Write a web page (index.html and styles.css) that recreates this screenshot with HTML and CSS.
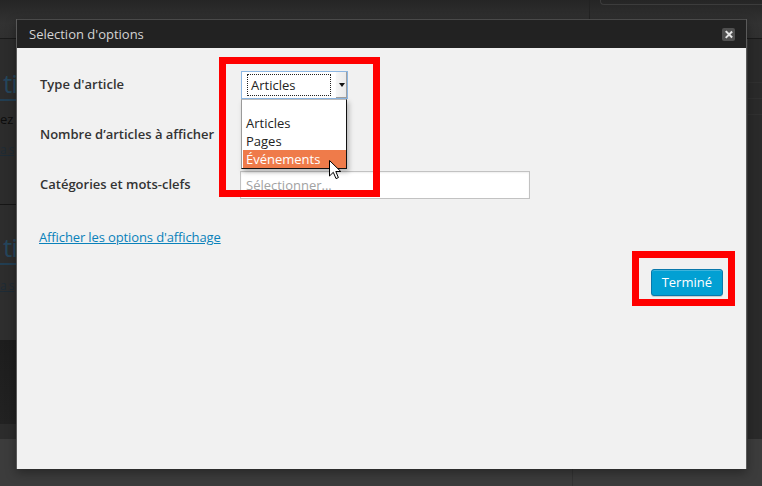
FILE: index.html
```html
<!DOCTYPE html>
<html lang="fr">
<head>
<meta charset="utf-8">
<title>Selection d'options</title>
<link rel="stylesheet" href="styles.css">
</head>
<body>
<div class="page">
  <header class="wp-top">
    <div class="top-line"></div>
    <div class="top-box"></div>
  </header>
  <main class="wp-main">
    <section class="wp-col">
      <article class="post post-first">
        <h2 class="post-title">ti</h2>
        <p class="post-excerpt">ez</p>
        <a class="post-link">a s</a>
      </article>
      <article class="post post-second">
        <h2 class="post-title">ti</h2>
        <a class="post-link">a s</a>
      </article>
      <div class="band-dark"></div>
      <div class="band-light"></div>
    </section>
    <div class="wp-center"></div>
    <aside class="wp-side">
      <div class="side-row"></div>
      <div class="side-row"></div>
      <div class="side-row"></div>
    </aside>
  </main>
  <footer class="wp-foot"><div class="foot-line"></div></footer>
</div>

<div class="modal">
  <div class="modal-head">
    <span class="modal-title">Selection d'options</span>
    <span class="modal-close"></span>
  </div>
  <div class="modal-body">
    <div class="form-grid">
      <label class="form-label">Type d'article</label>
      <div class="fake-select">
        <span class="select-value">Articles</span>
        <span class="select-arrow"></span>
      </div>
      <label class="form-label">Nombre d’articles à afficher</label>
      <div class="hidden-field"></div>
      <label class="form-label">Catégories et mots-clefs</label>
      <div class="fake-input">Sélectionner...</div>
    </div>
    <a class="display-link">Afficher les options d'affichage</a>
    <div class="actions">
      <button class="btn-primary">Terminé</button>
    </div>
  </div>
</div>

<ul class="dropdown">
  <li class="opt opt-blank"></li>
  <li class="opt">Articles</li>
  <li class="opt">Pages</li>
  <li class="opt opt-active">Événements</li>
</ul>

<svg class="cursor" width="13" height="20" viewBox="0 0 13 20">
  <path d="M0.5 0.5 L0.5 16 L4.3 12.3 L7 18.6 L9.4 17.6 L6.8 11.5 L11.8 11.5 Z" fill="#fff" stroke="#000" stroke-width="1" stroke-linejoin="miter"/>
</svg>

<div class="annot annot-select"></div>
<div class="annot annot-button"></div>
</body>
</html>
```

FILE: styles.css
```css
* { box-sizing: border-box; }

html, body {
  margin: 0;
  padding: 0;
}

body {
  width: 762px;
  height: 486px;
  overflow: hidden;
  position: relative;
  background: #3d3d3d;
  font-family: "Open Sans", "DejaVu Sans", sans-serif;
}

/* ---------- dimmed backdrop ---------- */
.page {
  height: 486px;
  display: flex;
  flex-direction: column;
}

.wp-top {
  height: 39px;
  display: flex;
  padding-left: 589px;
  background: linear-gradient(#252525, #323232 60%, #303030);
  border-bottom: 1px solid #1a1a1a;
}

.top-line {
  width: 11px;
  height: 22px;
  border-left: 1px solid #232323;
}

.top-box {
  flex: 1;
  height: 5px;
  border-left: 1px solid #3c3c3c;
  border-bottom: 1px solid #3c3c3c;
  border-bottom-left-radius: 4px;
}

.wp-main {
  height: 400px;
  display: flex;
  background: #2c2c2c;
}

.wp-col {
  width: 16px;
  flex: none;
  display: flex;
  flex-direction: column;
}

.wp-center {
  flex: 1;
  background: #2c2c2c;
}

.post {
  white-space: nowrap;
}

.post-first {
  height: 166px;
  padding-top: 28px;
  border-bottom: 1px solid #161616;
}

.post-second {
  height: 95px;
  padding-top: 26px;
  background: #2d2d2d;
}

.post-title {
  margin: 0;
  padding-left: 3px;
  font-size: 26px;
  font-weight: 400;
  line-height: 32px;
  letter-spacing: -1px;
  color: #25465d;
  border-bottom: 2px solid #223e52;
}

.post-excerpt {
  margin: 9px 0 0 0;
  font-size: 13px;
  line-height: 18px;
  color: #0d0d0d;
}

.post-link {
  display: block;
  margin: 13px 0 0 0;
  font-size: 12px;
  line-height: 18px;
  letter-spacing: -0.5px;
  color: #1e2b35;
  text-decoration: underline;
}

.post-second .post-link {
  margin-top: 12px;
}

.band-dark {
  height: 40px;
  background: #2e2e2e;
}

.band-light {
  height: 84px;
  background: linear-gradient(#1d1d1d, #222);
}

.wp-side {
  width: 15px;
  border-left: 1px solid #3a3a3a;
  background: #2a2a2a;
  padding-top: 28px;
}

.side-row {
  height: 16px;
  border-bottom: 1px solid #303030;
}

.wp-foot {
  flex: 1;
  background: #3c3c3c;
  padding-left: 572px;
}

.foot-line {
  height: 100%;
  border-left: 1px solid #333;
}

/* ---------- modal ---------- */
.modal {
  position: absolute;
  left: 16px;
  top: 19px;
  width: 731px;
  height: 450px;
  display: flex;
  flex-direction: column;
  border-left: 1px solid #5a5a5a;
  border-right: 1px solid #5a5a5a;
  box-shadow: 0 4px 10px rgba(0, 0, 0, 0.35);
}

.modal-head {
  height: 29px;
  flex: none;
  display: flex;
  align-items: center;
  justify-content: space-between;
  padding: 0 11px 0 12px;
  background: #222;
  border-top: 1px solid #4a4a4a;
}

.modal-title {
  font-size: 13px;
  color: #d4d4d4;
  line-height: 18px;
}

.modal-close {
  width: 13px;
  height: 13px;
  border-radius: 2px;
  background: #505050;
  position: relative;
  margin-top: 1px;
}

.modal-close::before,
.modal-close::after {
  content: "";
  position: absolute;
  left: 6px;
  top: 2px;
  width: 1.5px;
  height: 9px;
  background: #e6e6e6;
  transform: rotate(45deg);
}

.modal-close::after {
  transform: rotate(-45deg);
}

.modal-body {
  flex: 1;
  background: #f1f1f1;
  padding: 23px 23px 0 23px;
  display: flex;
  flex-direction: column;
}

.form-grid {
  display: grid;
  grid-template-columns: 200px 1fr;
  grid-auto-rows: 28px;
  row-gap: 22px;
  align-items: center;
}

.form-label {
  font-size: 13px;
  font-weight: 600;
  color: #333;
  line-height: 18px;
  padding-bottom: 3px;
}

.fake-select {
  width: 107px;
  height: 28px;
  margin-left: 1px;
  display: flex;
  align-items: stretch;
  background: #fff;
  border: 1px solid #8cb6e2;
}

.select-value {
  width: 82px;
  margin: 3px 0 3px 6px;
  outline: 1px dotted #222;
  font-size: 13px;
  line-height: 20px;
  color: #222;
  padding-left: 3px;
}

.select-arrow {
  margin-left: auto;
  width: 12px;
  background: linear-gradient(90deg, #f6f6f6, #e9e9e9);
  border-left: 1px solid #fdfdfd;
  box-shadow: inset -1px -1px 0 #a0a0a0;
  position: relative;
}

.select-arrow::after {
  content: "";
  position: absolute;
  left: 3px;
  top: 11px;
  border-left: 3px solid transparent;
  border-right: 3px solid transparent;
  border-top: 4px solid #111;
}

.hidden-field {
  height: 28px;
}

.fake-input {
  width: 290px;
  height: 28px;
  background: #fff;
  border: 1px solid #c2c2c2;
  box-shadow: inset 0 1px 2px rgba(0, 0, 0, 0.07);
  font-size: 13px;
  line-height: 26px;
  color: #a2a2a2;
  padding-left: 5px;
}

.display-link {
  margin: 29px 0 0 -1px;
  align-self: flex-start;
  font-size: 13px;
  line-height: 19px;
  letter-spacing: -0.12px;
  color: #0a81ba;
  text-decoration: underline;
}

.actions {
  display: flex;
  justify-content: flex-end;
  margin-top: 22px;
}

.btn-primary {
  height: 27px;
  padding: 0 10px;
  font-family: "Open Sans", "DejaVu Sans", sans-serif;
  font-size: 13px;
  line-height: 25px;
  color: #fff;
  background: #02a0d3;
  border: 1px solid #0978ab;
  border-radius: 3px;
  box-shadow: inset 0 1px 0 rgba(120, 200, 230, 0.5), 0 1px 0 rgba(0, 0, 0, 0.15);
}

/* ---------- overlays ---------- */
.dropdown {
  position: absolute;
  left: 241px;
  top: 99px;
  width: 106px;
  margin: 0;
  padding: 0;
  list-style: none;
  background: #fff;
  border: 1px solid #111;
  border-left-color: #9a9a9a;
  border-top-color: #bbb;
  box-shadow: 2px 3px 5px rgba(0, 0, 0, 0.25);
}

.opt {
  height: 18px;
  padding-left: 4px;
  font-size: 13px;
  line-height: 18px;
  color: #222;
  white-space: nowrap;
}

.opt-blank {
  height: 14px;
}

.opt-active {
  margin-left: 1px;
  padding-left: 3px;
  background: #ef7b4a;
  color: #fff;
}

.cursor {
  position: absolute;
  left: 329px;
  top: 160px;
}

.annot {
  position: absolute;
  border: 7px solid #ff0000;
}

.annot-select {
  left: 219px;
  top: 57px;
  width: 161px;
  height: 140px;
}

.annot-button {
  left: 632px;
  top: 251px;
  width: 103px;
  height: 55px;
}
```
